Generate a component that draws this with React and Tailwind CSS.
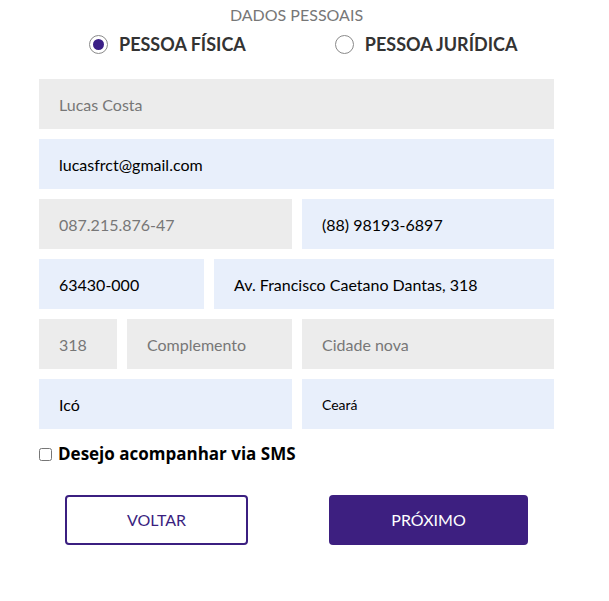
import { useState } from 'react';

const gray = 'bg-[#ececec] text-[#777]';
const blue = 'bg-[#e8effb] text-black';

function Field({ value, tone, className = '', size = 'text-[16px]' }) {
  return (
    <div className={`h-[50px] flex items-center pl-[20px] pt-px ${size} ${tone === 'gray' ? gray : blue} ${className}`}>
      {value}
    </div>
  );
}

function Radio({ checked, label, className = '' }) {
  return (
    <label className={`flex items-center gap-[11px] ${className}`}>
      <span className="w-[19px] h-[19px] rounded-full border border-[#8a8a8a] bg-white flex items-center justify-center">
        {checked && <span className="w-[11px] h-[11px] rounded-full bg-[#3b2087]" />}
      </span>
      <span className="text-[18px] font-bold text-[#333]">{label}</span>
    </label>
  );
}

export default function App() {
  const [sms, setSms] = useState(false);

  return (
    <div className="w-[609px] h-[601px] bg-white font-['Lato',sans-serif]">
      <div className="ml-[39px] w-[515px]">
        <div className="pt-[5px] text-center text-[16px] text-[#777] leading-[19px]">DADOS PESSOAIS</div>
        <div className="flex items-center h-[32px] mt-[4px]">
          <Radio checked label="PESSOA FÍSICA" className="ml-[50px]" />
          <Radio label="PESSOA JURÍDICA" className="ml-[89px]" />
        </div>

        <div className="mt-[19px] flex flex-col gap-[10px]">
          <Field value="Lucas Costa" tone="gray" />
          <Field value="lucasfrct@gmail.com" />
          <div className="grid grid-cols-[253px_1fr] gap-[10px]">
            <Field value="087.215.876-47" tone="gray" />
            <Field value="(88) 98193-6897" />
          </div>
          <div className="grid grid-cols-[165px_1fr] gap-[10px]">
            <Field value="63430-000" />
            <Field value="Av. Francisco Caetano Dantas, 318" />
          </div>
          <div className="grid grid-cols-[78px_165px_1fr] gap-[10px]">
            <Field value="318" tone="gray" />
            <Field value="Complemento" tone="gray" />
            <Field value="Cidade nova" tone="gray" />
          </div>
          <div className="grid grid-cols-[253px_1fr] gap-[10px]">
            <Field value="Icó" />
            <Field value="Ceará" size="text-[14px]" />
          </div>
        </div>

        <label className="mt-[14px] flex items-center gap-[6px] font-['Open_Sans',sans-serif]">
          <input
            type="checkbox"
            checked={sms}
            onChange={() => setSms(!sms)}
            className="w-[13px] h-[13px] m-0"
          />
          <span className="text-[17px] font-bold text-black leading-[22px]">Desejo acompanhar via SMS</span>
        </label>

        <div className="mt-[30px] flex">
          <button className="ml-[26px] w-[183px] h-[50px] rounded-[4px] border-2 border-[#3b1f80] text-[#3b1f80] text-[16px] bg-white">
            VOLTAR
          </button>
          <button className="ml-[81px] w-[199px] h-[50px] rounded-[4px] bg-[#3d1f80] text-white text-[16px]">
            PRÓXIMO
          </button>
        </div>
      </div>
    </div>
  );
}
